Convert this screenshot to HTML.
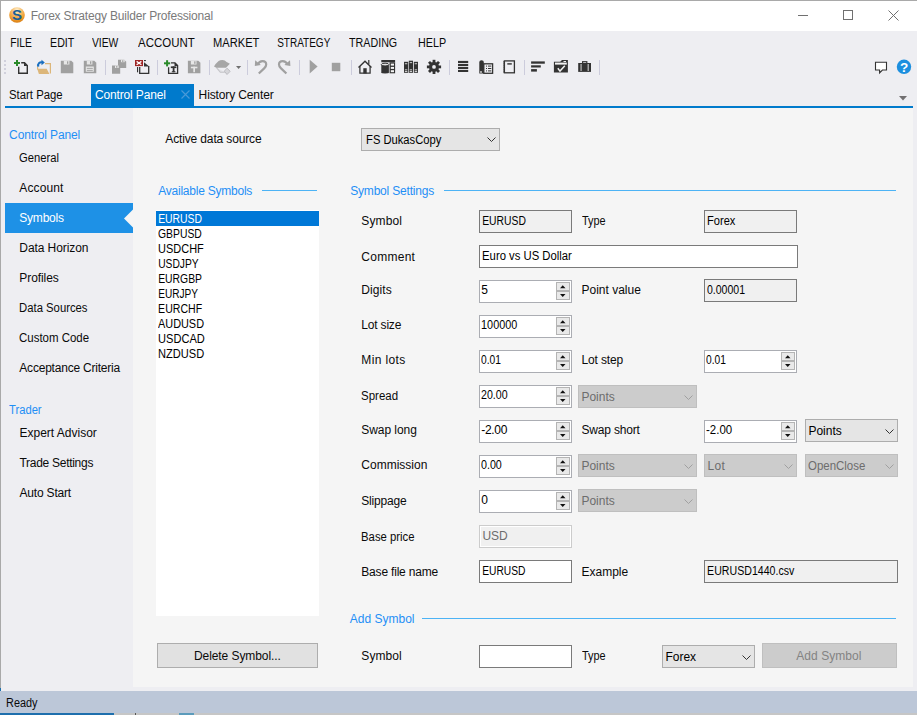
<!DOCTYPE html><html><head><meta charset="utf-8"><style>
html,body{margin:0;padding:0;width:917px;height:715px;overflow:hidden;position:relative;background:#eeeef2}
.t{position:absolute;white-space:nowrap;line-height:14px;font-family:"Liberation Sans",sans-serif}
.r{position:absolute}
</style></head><body>
<div class="r" style="left:0px;top:0px;width:917px;height:715px;background:#eeeef2;"></div>
<div class="r" style="left:0px;top:0px;width:917px;height:31px;background:#ffffff;"></div>
<div class="r" style="left:0px;top:0px;width:917px;height:1px;background:#a9a9a9;"></div>
<div class="r" style="left:0px;top:0px;width:1px;height:688px;background:#a9a9a9;"></div>
<div class="r" style="left:0px;top:688px;width:1px;height:27px;background:#1c6fad;"></div>
<svg class="r" style="left:9px;top:7px" width="16" height="16" viewBox="0 0 16 16">
<defs><radialGradient id="g1" cx="0.5" cy="0.2" r="0.85"><stop offset="0" stop-color="#fff4d8"/><stop offset="0.35" stop-color="#f6c070"/><stop offset="0.7" stop-color="#ee9a2a"/><stop offset="1" stop-color="#d27812"/></radialGradient></defs>
<circle cx="8" cy="8" r="7.8" fill="url(#g1)"/>
<text x="8.1" y="13.4" text-anchor="middle" font-family="Liberation Sans" font-weight="bold" font-size="15" fill="#175f96">S</text></svg>
<div class="t " style="left:30.7px;top:9px;color:#7a7a7a;font-size:12px;letter-spacing:-0.185px;">Forex Strategy Builder Professional</div>
<div class="r" style="left:798px;top:15px;width:10px;height:1px;background:#707070;"></div>
<div class="r" style="left:843px;top:10px;width:10px;height:10px;background:transparent;border:1px solid #707070;box-sizing:border-box;"></div>
<svg class="r" style="left:888px;top:10px" width="11" height="11" viewBox="0 0 11 11"><path d="M0.5 0.5L10.5 10.5M10.5 0.5L0.5 10.5" stroke="#707070" stroke-width="1"/></svg>
<div class="t " style="left:10px;top:36px;color:#0a0a0a;font-size:12px;transform:scaleX(0.8583);transform-origin:1px 0;">FILE</div>
<div class="t " style="left:50.2px;top:36px;color:#0a0a0a;font-size:12px;transform:scaleX(0.8846);transform-origin:1px 0;">EDIT</div>
<div class="t " style="left:92px;top:36px;color:#0a0a0a;font-size:12px;transform:scaleX(0.8581);transform-origin:0px 0;">VIEW</div>
<div class="t " style="left:138px;top:36px;color:#0a0a0a;font-size:12px;transform:scaleX(0.9559);transform-origin:0px 0;">ACCOUNT</div>
<div class="t " style="left:212.8px;top:36px;color:#0a0a0a;font-size:12px;transform:scaleX(0.9245);transform-origin:1px 0;">MARKET</div>
<div class="t " style="left:277.1px;top:36px;color:#0a0a0a;font-size:12px;transform:scaleX(0.8333);transform-origin:1px 0;">STRATEGY</div>
<div class="t " style="left:349.4px;top:36px;color:#0a0a0a;font-size:12px;transform:scaleX(0.8926);transform-origin:0px 0;">TRADING</div>
<div class="t " style="left:417.5px;top:36px;color:#0a0a0a;font-size:12px;transform:scaleX(0.8967);transform-origin:1px 0;">HELP</div>
<svg class="r" style="left:0;top:0" width="917" height="110" viewBox="0 0 917 110"><rect x="4" y="60" width="2" height="2" fill="#d0d0dc"/><rect x="4" y="64" width="2" height="2" fill="#d0d0dc"/><rect x="4" y="68" width="2" height="2" fill="#d0d0dc"/><rect x="4" y="72" width="2" height="2" fill="#d0d0dc"/><rect x="105" y="60" width="1" height="15" fill="#ccccdc"/><rect x="157" y="60" width="1" height="15" fill="#ccccdc"/><rect x="209" y="60" width="1" height="15" fill="#ccccdc"/><rect x="247" y="60" width="1" height="15" fill="#ccccdc"/><rect x="299" y="60" width="1" height="15" fill="#ccccdc"/><rect x="351" y="60" width="1" height="15" fill="#ccccdc"/><rect x="449" y="60" width="1" height="15" fill="#ccccdc"/><rect x="524" y="60" width="1" height="15" fill="#ccccdc"/><rect x="599" y="60" width="1" height="15" fill="#ccccdc"/><rect x="14" y="62" width="6" height="2" fill="#2a8a2a"/><rect x="16" y="60" width="2" height="6" fill="#2a8a2a"/><path d="M21.2 62.7H24.5L27.3 65.5V73.3H18.7V66.8" stroke="#333333" stroke-width="1.4" fill="none"/><path d="M24 62.5L27.5 66H24Z" fill="#333333"/><path d="M45 63.6H50.4V73.4" stroke="#dcb67a" stroke-width="1.2" fill="none"/><path d="M37.2 68.8H46.7L49.4 74H38.9Z" fill="#dcb67a"/><rect x="37" y="66.5" width="1.2" height="3" fill="#dcb67a"/><path d="M38.5 66.6C37.2 63.8 39.5 61.8 42.6 62.4" stroke="#1a6fc0" stroke-width="2" fill="none"/><path d="M41.5 59.8L44.8 62.5L41.5 65.2Z" fill="#1a6fc0"/><path d="M60.8 60.7H71.3L73.3 62.7V73.2H60.8Z" fill="#a0a0a0"/><rect x="63.8" y="60.7" width="5.6" height="3.8" fill="#e6e6e6"/><rect x="67.0" y="61.300000000000004" width="1.3" height="2.5" fill="#a0a0a0"/><path d="M83.8 60.7H94.3L96.3 62.7V73.2H83.8Z" fill="#a0a0a0"/><rect x="86.8" y="60.7" width="5.6" height="3.8" fill="#e6e6e6"/><rect x="90.0" y="61.300000000000004" width="1.3" height="2.5" fill="#a0a0a0"/><rect x="85.8" y="66.5" width="8.0" height="5.2" fill="#e6e6e6"/><rect x="86.8" y="67.9" width="6.0" height="0.9" fill="#a0a0a0"/><rect x="86.8" y="69.9" width="6.0" height="0.9" fill="#a0a0a0"/><path d="M118 59.7H124.2L126.2 61.7V67.9H118Z" fill="#a0a0a0"/><rect x="121" y="59.7" width="3.7" height="2.5" fill="#e6e6e6"/><rect x="122.1" y="60.300000000000004" width="1.3" height="1.6" fill="#a0a0a0"/><path d="M112 65.5H118.2L120.2 67.5V73.7H112Z" fill="#a0a0a0"/><rect x="115" y="65.5" width="3.7" height="2.5" fill="#e6e6e6"/><rect x="116.1" y="66.1" width="1.3" height="1.6" fill="#a0a0a0"/><path d="M148.7 66V73.3H139.7V67" stroke="#333333" stroke-width="1.3" fill="none"/><path d="M144 62.2L149.3 66.6H144Z" fill="#333333"/><rect x="144" y="60" width="1.9" height="1.1" fill="#333333"/><rect x="137" y="67" width="1.1" height="5.3" fill="#333333"/><rect x="135" y="60" width="8" height="6.1" fill="#9e2424"/><path d="M136.6 61.4L141.4 64.7M141.4 61.4L136.6 64.7" stroke="#ffffff" stroke-width="1.3"/><rect x="138" y="62" width="2" height="2" fill="#fff"/><rect x="164" y="62.3" width="6.2" height="2" fill="#2a8a2a"/><rect x="166.1" y="60.2" width="2" height="6.2" fill="#2a8a2a"/><path d="M171 62.9H175L177.6 65.5V73.3H168.6V67.2" stroke="#333333" stroke-width="1.3" fill="none"/><path d="M174.5 62.6L178 66.1H174.5Z" fill="#333333"/><rect x="170.8" y="66.4" width="5.6" height="1.7" fill="#333333"/><rect x="172.7" y="66.4" width="1.8" height="5.8" fill="#333333"/><rect x="171.8" y="71.2" width="3.6" height="1" fill="#333333"/><path d="M187.9 60.7H198.4L200.4 62.7V73.2H187.9Z" fill="#a0a0a0"/><rect x="190.9" y="60.7" width="5.6" height="3.8" fill="#e6e6e6"/><rect x="194.2" y="61.300000000000004" width="1.3" height="2.5" fill="#a0a0a0"/><rect x="190.9" y="66.7" width="6.5" height="1.6" fill="#e6e6e6"/><rect x="193.3" y="66.7" width="1.7" height="5.5" fill="#e6e6e6"/><path d="M216.5 67.6L220.3 72.3H224.8" stroke="#c4c4c8" stroke-width="1.1" fill="#e2e2e6"/><path d="M224.3 71.2L227 68.2L230.2 71.3L227 74.5Z" fill="#d6d6da" stroke="#b8b8bc" stroke-width="0.9"/><path d="M214 66.4Q215.2 64 218.6 61Q220 60.1 222.4 60.1Q225 60.1 226.6 61.9L229.9 63.8L226 67.8H216.3Z" fill="#a6a6a6"/><path d="M236 66H241.2L238.6 69Z" fill="#707070"/><path d="M257.6 64.4C259 61.8 260.8 61.1 262.5 61.1C265 61.1 266.2 62.7 266.2 64.6C266.2 66.1 265.5 67.1 264.4 68.1L258.8 73.5" stroke="#a0a0a0" stroke-width="2.2" fill="none"/><path d="M255.2 60.2L254.8 65.9L260.8 65Z" fill="#a0a0a0"/><g transform="translate(545.2 0) scale(-1 1)"><path d="M257.6 64.4C259 61.8 260.8 61.1 262.5 61.1C265 61.1 266.2 62.7 266.2 64.6C266.2 66.1 265.5 67.1 264.4 68.1L258.8 73.5" stroke="#a0a0a0" stroke-width="2.2" fill="none"/><path d="M255.2 60.2L254.8 65.9L260.8 65Z" fill="#a0a0a0"/></g><path d="M309.7 59.8L317.6 66.6L309.7 73.4Z" fill="#a0a0a0"/><rect x="331.8" y="62.8" width="8.5" height="8.4" fill="#a0a0a0"/><path d="M358.5 67.6L365 61.2L371.5 67.6" stroke="#333333" stroke-width="1.35" fill="none"/><rect x="368.2" y="60" width="1.2" height="4.3" fill="#333333"/><path d="M359.9 66.2V73.1H370.1V66.2" stroke="#333333" stroke-width="1.25" fill="none"/><rect x="363.3" y="68.2" width="3.4" height="5.3" fill="#333333"/><rect x="381.3" y="60" width="13.8" height="2.3" fill="#333333"/><rect x="381.3" y="64.6" width="7.6" height="8.1" fill="#333333"/><ellipse cx="385.1" cy="64.6" rx="3.8" ry="1.4" fill="#e0e0e0" stroke="#333333" stroke-width="1"/><ellipse cx="385.1" cy="72.6" rx="3.8" ry="0.9" fill="#333333"/><rect x="389.6" y="62.3" width="5.5" height="11" fill="#333333"/><rect x="390.8" y="63.6" width="3.2" height="2" fill="#f4f4f4"/><rect x="390.8" y="66.9" width="3.2" height="2" fill="#f4f4f4"/><rect x="390.8" y="70.2" width="3.2" height="2" fill="#f4f4f4"/><rect x="404" y="61.8" width="4.2" height="11.0" fill="#333333"/><rect x="404.9" y="63.3" width="2.4" height="0.9" fill="#e0e0e0"/><rect x="404.9" y="69.4" width="2.4" height="0.9" fill="#e0e0e0"/><rect x="404.9" y="71" width="2.4" height="0.9" fill="#e0e0e0"/><rect x="408.8" y="60.7" width="4.2" height="12.1" fill="#333333"/><rect x="409.7" y="62.2" width="2.4" height="0.9" fill="#e0e0e0"/><rect x="409.7" y="69.4" width="2.4" height="0.9" fill="#e0e0e0"/><rect x="409.7" y="71" width="2.4" height="0.9" fill="#e0e0e0"/><rect x="413.8" y="61.8" width="4.2" height="11.0" fill="#333333"/><rect x="414.7" y="63.3" width="2.4" height="0.9" fill="#e0e0e0"/><rect x="414.7" y="69.4" width="2.4" height="0.9" fill="#e0e0e0"/><rect x="414.7" y="71" width="2.4" height="0.9" fill="#e0e0e0"/><rect x="432.6" y="59.8" width="2.8" height="3" fill="#333333" transform="rotate(0 434 66.9)"/><rect x="432.6" y="59.8" width="2.8" height="3" fill="#333333" transform="rotate(45 434 66.9)"/><rect x="432.6" y="59.8" width="2.8" height="3" fill="#333333" transform="rotate(90 434 66.9)"/><rect x="432.6" y="59.8" width="2.8" height="3" fill="#333333" transform="rotate(135 434 66.9)"/><rect x="432.6" y="59.8" width="2.8" height="3" fill="#333333" transform="rotate(180 434 66.9)"/><rect x="432.6" y="59.8" width="2.8" height="3" fill="#333333" transform="rotate(225 434 66.9)"/><rect x="432.6" y="59.8" width="2.8" height="3" fill="#333333" transform="rotate(270 434 66.9)"/><rect x="432.6" y="59.8" width="2.8" height="3" fill="#333333" transform="rotate(315 434 66.9)"/><circle cx="434" cy="66.9" r="5" fill="#333333"/><circle cx="434" cy="66.9" r="1.9" fill="#eeeef2"/><rect x="458" y="60.9" width="10.2" height="2.1" fill="#333333"/><rect x="458" y="63.9" width="10.2" height="2.1" fill="#333333"/><rect x="458" y="66.9" width="10.2" height="2.1" fill="#333333"/><rect x="458" y="69.9" width="10.2" height="2.1" fill="#333333"/><rect x="483.8" y="63.8" width="8.8" height="9.5" fill="none" stroke="#333333" stroke-width="1.3"/><path d="M479.3 62Q479.3 60.2 481.5 60.2Q483.8 60.2 483.8 62V73.6H479.3Z" fill="#333333"/><circle cx="481" cy="72" r="0.9" fill="#ddd"/><rect x="486" y="65.6" width="1" height="1" fill="#333333"/><rect x="488" y="65.6" width="3.3" height="1" fill="#333333"/><rect x="486" y="68" width="1" height="1" fill="#333333"/><rect x="488" y="68" width="3.3" height="1" fill="#333333"/><rect x="486" y="70.4" width="1" height="1" fill="#333333"/><rect x="488" y="70.4" width="3.3" height="1" fill="#333333"/><rect x="504.4" y="60.9" width="10" height="11.9" fill="none" stroke="#333333" stroke-width="1.3"/><rect x="507.3" y="63.2" width="4.5" height="1.4" fill="#333333"/><rect x="503" y="61.5" width="1.2" height="0.9" fill="#333333"/><rect x="503" y="63.5" width="1.2" height="0.9" fill="#333333"/><rect x="503" y="65.5" width="1.2" height="0.9" fill="#333333"/><rect x="503" y="67.5" width="1.2" height="0.9" fill="#333333"/><rect x="503" y="69.5" width="1.2" height="0.9" fill="#333333"/><rect x="503" y="71.5" width="1.2" height="0.9" fill="#333333"/><rect x="531.1" y="61.4" width="13.7" height="2.3" fill="#333333"/><rect x="531.1" y="65.3" width="9.7" height="2.2" fill="#333333"/><rect x="531.1" y="69.1" width="5.8" height="2.5" fill="#333333"/><path d="M553.9 61.8H560.2L562 59.9H567.9V72.6H553.9Z" fill="#333333"/><rect x="555" y="62.6" width="11.8" height="2" fill="#f2f2f2"/><rect x="563.5" y="61" width="2.5" height="1" fill="#f2f2f2"/><path d="M557.8 68.3L560 71.1L564.8 65.8" stroke="#f2f2f2" stroke-width="1.5" fill="none"/><rect x="582.6" y="61.7" width="4.2" height="2" fill="none" stroke="#333333" stroke-width="1.2"/><rect x="578.2" y="63" width="12.8" height="8.9" fill="#333333"/><rect x="580.6" y="64" width="0.9" height="7" fill="#eee"/><rect x="587.7" y="64" width="0.9" height="7" fill="#eee"/><path d="M875.5 62.2H886.5V70H882.4L879.6 72.8V70H875.5Z" fill="#fff" stroke="#333333" stroke-width="1.1"/><circle cx="904" cy="66.8" r="7.2" fill="#1c8fdf"/><text x="904.2" y="71.6" text-anchor="middle" font-family="Liberation Sans" font-weight="bold" font-size="13.5" fill="#fff">?</text></svg>
<div class="r" style="left:91px;top:84px;width:103px;height:22px;background:#007acc;"></div>
<div class="t " style="left:8.9px;top:88px;color:#0a0a0a;font-size:12px;transform:scaleX(0.9446);transform-origin:1px 0;">Start Page</div>
<div class="t " style="left:94.9px;top:88px;color:#ffffff;font-size:12px;letter-spacing:-0.142px;">Control Panel</div>
<svg class="r" style="left:181px;top:90px" width="9" height="9" viewBox="0 0 9 9"><path d="M0.5 0.5L8.5 8.5M8.5 0.5L0.5 8.5" stroke="#4a9ad8" stroke-width="1.1"/></svg>
<div class="t " style="left:198.6px;top:88px;color:#0a0a0a;font-size:12px;letter-spacing:-0.123px;">History Center</div>
<div class="r" style="left:5px;top:106px;width:908px;height:2px;background:#007acc;"></div>
<svg class="r" style="left:899px;top:96px" width="8" height="5" viewBox="0 0 8 5"><path d="M0 0H8L4 4.5Z" fill="#716f71"/></svg>
<div class="r" style="left:133px;top:108px;width:780px;height:579px;background:#f5f5f5;"></div>
<div class="t " style="left:9.1px;top:128px;color:#1f8ff5;font-size:12px;letter-spacing:-0.133px;">Control Panel</div>
<div class="t " style="left:19.3px;top:151px;color:#0a0a0a;font-size:12px;transform:scaleX(0.9357);transform-origin:0px 0;">General</div>
<div class="t " style="left:19.3px;top:181px;color:#0a0a0a;font-size:12px;letter-spacing:0.133px;">Account</div>
<div class="r" style="left:5px;top:203px;width:128px;height:30px;background:#1e91e6;"></div>
<svg class="r" style="left:124px;top:209px" width="9" height="19" viewBox="0 0 9 19"><path d="M9 0.5L0 9.5L9 18.5Z" fill="#f5f5f5"/></svg>
<div class="t " style="left:19.3px;top:211px;color:#ffffff;font-size:12px;letter-spacing:-0.217px;">Symbols</div>
<div class="t " style="left:19.3px;top:241px;color:#0a0a0a;font-size:12px;letter-spacing:-0.073px;">Data Horizon</div>
<div class="t " style="left:19.3px;top:271px;color:#0a0a0a;font-size:12px;letter-spacing:-0.071px;">Profiles</div>
<div class="t " style="left:19.3px;top:301px;color:#0a0a0a;font-size:12px;transform:scaleX(0.9417);transform-origin:1px 0;">Data Sources</div>
<div class="t " style="left:19.3px;top:331px;color:#0a0a0a;font-size:12px;transform:scaleX(0.9548);transform-origin:0px 0;">Custom Code</div>
<div class="t " style="left:19.3px;top:361px;color:#0a0a0a;font-size:12px;letter-spacing:-0.211px;">Acceptance Criteria</div>
<div class="t " style="left:9.2px;top:403px;color:#1f8ff5;font-size:12px;transform:scaleX(0.9343);transform-origin:0px 0;">Trader</div>
<div class="t " style="left:19.5px;top:426px;color:#0a0a0a;font-size:12px;">Expert Advisor</div>
<div class="t " style="left:19.5px;top:456px;color:#0a0a0a;font-size:12px;letter-spacing:-0.285px;">Trade Settings</div>
<div class="t " style="left:19.5px;top:486px;color:#0a0a0a;font-size:12px;letter-spacing:-0.189px;">Auto Start</div>
<div class="r" style="left:0px;top:691px;width:917px;height:22px;background:#bcc7d8;"></div>
<div class="r" style="left:0px;top:713px;width:917px;height:2px;background:#c6c6c6;"></div>
<div class="r" style="left:0px;top:713px;width:114px;height:2px;background:#1e6fad;"></div>
<div class="r" style="left:135px;top:713px;width:1px;height:2px;background:#555555;"></div>
<div class="r" style="left:179px;top:713px;width:15px;height:2px;background:#5b9bbb;"></div>
<div class="t " style="left:5.8px;top:696px;color:#0a0a0a;font-size:12px;transform:scaleX(0.9059);transform-origin:1px 0;">Ready</div>
<div class="t " style="left:165.3px;top:132px;color:#0a0a0a;font-size:12px;letter-spacing:-0.141px;">Active data source</div>
<div class="r" style="left:361px;top:128px;width:139px;height:23px;background:#e5e5e5;border:1px solid #adadad;box-sizing:border-box;"></div>
<div class="t " style="left:365.5px;top:133px;color:#000000;font-size:12px;transform:scaleX(0.9325);transform-origin:1px 0;">FS DukasCopy</div>
<svg class="r" style="left:487px;top:137px" width="9" height="5" viewBox="0 0 9 5"><path d="M0.5 0.5L4.5 4.5L8.5 0.5" stroke="#333" fill="none" stroke-width="1"/></svg>
<div class="t " style="left:158.2px;top:184px;color:#1f8ff5;font-size:12px;letter-spacing:-0.231px;">Available Symbols</div>
<div class="r" style="left:262px;top:190px;width:55px;height:1px;background:#4cb3f5;"></div>
<div class="t " style="left:350.2px;top:184px;color:#1f8ff5;font-size:12px;letter-spacing:-0.186px;">Symbol Settings</div>
<div class="r" style="left:444px;top:190px;width:452px;height:1px;background:#4cb3f5;"></div>
<div class="t " style="left:349.8px;top:612px;color:#1f8ff5;font-size:12px;">Add Symbol</div>
<div class="r" style="left:422px;top:618px;width:474px;height:1px;background:#4cb3f5;"></div>
<div class="r" style="left:156px;top:210px;width:163px;height:406px;background:#ffffff;"></div>
<div class="r" style="left:156px;top:211px;width:163px;height:15px;background:#0078d7;"></div>
<div class="t " style="left:158.2px;top:212px;color:#ffffff;font-size:12px;transform:scaleX(0.8653);transform-origin:1px 0;">EURUSD</div>
<div class="t " style="left:158.2px;top:227px;color:#000000;font-size:12px;transform:scaleX(0.8640);transform-origin:0px 0;">GBPUSD</div>
<div class="t " style="left:158.2px;top:242px;color:#000000;font-size:12px;transform:scaleX(0.9143);transform-origin:1px 0;">USDCHF</div>
<div class="t " style="left:158.2px;top:257px;color:#000000;font-size:12px;transform:scaleX(0.8543);transform-origin:1px 0;">USDJPY</div>
<div class="t " style="left:158.2px;top:272px;color:#000000;font-size:12px;transform:scaleX(0.8653);transform-origin:1px 0;">EURGBP</div>
<div class="t " style="left:158.2px;top:287px;color:#000000;font-size:12px;transform:scaleX(0.8413);transform-origin:1px 0;">EURJPY</div>
<div class="t " style="left:158.2px;top:302px;color:#000000;font-size:12px;transform:scaleX(0.8796);transform-origin:1px 0;">EURCHF</div>
<div class="t " style="left:158.2px;top:317px;color:#000000;font-size:12px;transform:scaleX(0.9080);transform-origin:0px 0;">AUDUSD</div>
<div class="t " style="left:158.2px;top:332px;color:#000000;font-size:12px;transform:scaleX(0.9224);transform-origin:1px 0;">USDCAD</div>
<div class="t " style="left:158.2px;top:347px;color:#000000;font-size:12px;transform:scaleX(0.9224);transform-origin:1px 0;">NZDUSD</div>
<div class="r" style="left:157px;top:643px;width:161px;height:25px;background:#e1e1e1;border:1px solid #adadad;box-sizing:border-box;"></div>
<div class="t " style="left:194px;top:649px;color:#0a0a0a;font-size:12px;letter-spacing:-0.080px;">Delete Symbol...</div>
<div class="t " style="left:361.3px;top:214px;color:#0a0a0a;font-size:12px;letter-spacing:0.120px;">Symbol</div>
<div class="t " style="left:361.3px;top:250px;color:#0a0a0a;font-size:12px;letter-spacing:0.267px;">Comment</div>
<div class="t " style="left:361.3px;top:283px;color:#0a0a0a;font-size:12px;letter-spacing:0.080px;">Digits</div>
<div class="t " style="left:361.3px;top:318px;color:#0a0a0a;font-size:12px;letter-spacing:-0.186px;">Lot size</div>
<div class="t " style="left:361.3px;top:353px;color:#0a0a0a;font-size:12px;letter-spacing:0.386px;">Min lots</div>
<div class="t " style="left:361.3px;top:389px;color:#0a0a0a;font-size:12px;transform:scaleX(0.9568);transform-origin:1px 0;">Spread</div>
<div class="t " style="left:361.3px;top:423px;color:#0a0a0a;font-size:12px;letter-spacing:-0.062px;">Swap long</div>
<div class="t " style="left:361.3px;top:458px;color:#0a0a0a;font-size:12px;">Commission</div>
<div class="t " style="left:361.3px;top:494px;color:#0a0a0a;font-size:12px;letter-spacing:-0.186px;">Slippage</div>
<div class="t " style="left:361.3px;top:530px;color:#0a0a0a;font-size:12px;transform:scaleX(0.9429);transform-origin:1px 0;">Base price</div>
<div class="t " style="left:361.3px;top:565px;color:#0a0a0a;font-size:12px;letter-spacing:-0.192px;">Base file name</div>
<div class="t " style="left:361.3px;top:649px;color:#0a0a0a;font-size:12px;letter-spacing:0.080px;">Symbol</div>
<div class="t " style="left:581.5px;top:214px;color:#0a0a0a;font-size:12px;transform:scaleX(0.9077);transform-origin:0px 0;">Type</div>
<div class="t " style="left:581.5px;top:283px;color:#0a0a0a;font-size:12px;">Point value</div>
<div class="t " style="left:581.5px;top:353px;color:#0a0a0a;font-size:12px;letter-spacing:-0.129px;">Lot step</div>
<div class="t " style="left:581.5px;top:423px;color:#0a0a0a;font-size:12px;letter-spacing:-0.178px;">Swap short</div>
<div class="t " style="left:581.5px;top:565px;color:#0a0a0a;font-size:12px;">Example</div>
<div class="t " style="left:581.5px;top:649px;color:#0a0a0a;font-size:12px;transform:scaleX(0.9077);transform-origin:0px 0;">Type</div>
<div class="r" style="left:479px;top:210px;width:93px;height:23px;background:#f0f0f0;border:1px solid #7a7a7a;box-sizing:border-box;"></div>
<div class="t " style="left:482.3px;top:214px;color:#000000;font-size:12px;transform:scaleX(0.8633);transform-origin:1px 0;">EURUSD</div>
<div class="r" style="left:704px;top:210px;width:93px;height:23px;background:#f0f0f0;border:1px solid #7a7a7a;box-sizing:border-box;"></div>
<div class="t " style="left:707.3px;top:214px;color:#000000;font-size:12px;transform:scaleX(0.9233);transform-origin:1px 0;">Forex</div>
<div class="r" style="left:479px;top:245px;width:319px;height:23px;background:#ffffff;border:1px solid #7a7a7a;box-sizing:border-box;"></div>
<div class="t " style="left:482.3px;top:249px;color:#000000;font-size:12px;transform:scaleX(0.9415);transform-origin:1px 0;">Euro vs US Dollar</div>
<div class="r" style="left:479px;top:280px;width:93px;height:23px;background:#ffffff;border:1px solid #abadb3;box-sizing:border-box;"></div>
<div class="r" style="left:556px;top:282px;width:14px;height:9px;background:#e9e9e9;border:1px solid #b4b4b4;box-sizing:border-box;"></div>
<div class="r" style="left:556px;top:291px;width:14px;height:9px;background:#e9e9e9;border:1px solid #b4b4b4;box-sizing:border-box;"></div>
<svg class="r" style="left:560px;top:285px" width="6" height="14" viewBox="0 0 6 14"><path d="M0 3.3H5.5L2.75 0.3Z M0 9.1H5.5L2.75 12.1Z" fill="#111"/></svg>
<div class="t " style="left:481.2px;top:283px;color:#000000;font-size:12px;">5</div>
<div class="r" style="left:704px;top:279px;width:93px;height:23px;background:#f0f0f0;border:1px solid #7a7a7a;box-sizing:border-box;"></div>
<div class="t " style="left:707.3px;top:283px;color:#000000;font-size:12px;transform:scaleX(0.8767);transform-origin:0px 0;">0.00001</div>
<div class="r" style="left:479px;top:315px;width:93px;height:23px;background:#ffffff;border:1px solid #abadb3;box-sizing:border-box;"></div>
<div class="r" style="left:556px;top:317px;width:14px;height:9px;background:#e9e9e9;border:1px solid #b4b4b4;box-sizing:border-box;"></div>
<div class="r" style="left:556px;top:326px;width:14px;height:9px;background:#e9e9e9;border:1px solid #b4b4b4;box-sizing:border-box;"></div>
<svg class="r" style="left:560px;top:320px" width="6" height="14" viewBox="0 0 6 14"><path d="M0 3.3H5.5L2.75 0.3Z M0 9.1H5.5L2.75 12.1Z" fill="#111"/></svg>
<div class="t " style="left:481.2px;top:318px;color:#000000;font-size:12px;transform:scaleX(0.9026);transform-origin:1px 0;">100000</div>
<div class="r" style="left:479px;top:350px;width:93px;height:23px;background:#ffffff;border:1px solid #abadb3;box-sizing:border-box;"></div>
<div class="r" style="left:556px;top:352px;width:14px;height:9px;background:#e9e9e9;border:1px solid #b4b4b4;box-sizing:border-box;"></div>
<div class="r" style="left:556px;top:361px;width:14px;height:9px;background:#e9e9e9;border:1px solid #b4b4b4;box-sizing:border-box;"></div>
<svg class="r" style="left:560px;top:355px" width="6" height="14" viewBox="0 0 6 14"><path d="M0 3.3H5.5L2.75 0.3Z M0 9.1H5.5L2.75 12.1Z" fill="#111"/></svg>
<div class="t " style="left:481.2px;top:353px;color:#000000;font-size:12px;transform:scaleX(0.8522);transform-origin:0px 0;">0.01</div>
<div class="r" style="left:704px;top:350px;width:93px;height:23px;background:#ffffff;border:1px solid #abadb3;box-sizing:border-box;"></div>
<div class="r" style="left:781px;top:352px;width:14px;height:9px;background:#e9e9e9;border:1px solid #b4b4b4;box-sizing:border-box;"></div>
<div class="r" style="left:781px;top:361px;width:14px;height:9px;background:#e9e9e9;border:1px solid #b4b4b4;box-sizing:border-box;"></div>
<svg class="r" style="left:785px;top:355px" width="6" height="14" viewBox="0 0 6 14"><path d="M0 3.3H5.5L2.75 0.3Z M0 9.1H5.5L2.75 12.1Z" fill="#111"/></svg>
<div class="t " style="left:706.2px;top:353px;color:#000000;font-size:12px;transform:scaleX(0.8522);transform-origin:0px 0;">0.01</div>
<div class="r" style="left:479px;top:385px;width:93px;height:23px;background:#ffffff;border:1px solid #abadb3;box-sizing:border-box;"></div>
<div class="r" style="left:556px;top:387px;width:14px;height:9px;background:#e9e9e9;border:1px solid #b4b4b4;box-sizing:border-box;"></div>
<div class="r" style="left:556px;top:396px;width:14px;height:9px;background:#e9e9e9;border:1px solid #b4b4b4;box-sizing:border-box;"></div>
<svg class="r" style="left:560px;top:390px" width="6" height="14" viewBox="0 0 6 14"><path d="M0 3.3H5.5L2.75 0.3Z M0 9.1H5.5L2.75 12.1Z" fill="#111"/></svg>
<div class="t " style="left:481.2px;top:388px;color:#000000;font-size:12px;transform:scaleX(0.8867);transform-origin:0px 0;">20.00</div>
<div class="r" style="left:578px;top:385px;width:119px;height:23px;background:#cccccc;border:1px solid #bfbfbf;box-sizing:border-box;"></div>
<div class="t " style="left:581.4px;top:390px;color:#6d6d6d;font-size:12px;">Points</div>
<svg class="r" style="left:684px;top:395px" width="9" height="5" viewBox="0 0 9 5"><path d="M0.5 0.5L4.5 4.5L8.5 0.5" stroke="#a0a0a0" fill="none" stroke-width="1"/></svg>
<div class="r" style="left:479px;top:420px;width:93px;height:23px;background:#ffffff;border:1px solid #abadb3;box-sizing:border-box;"></div>
<div class="r" style="left:556px;top:422px;width:14px;height:9px;background:#e9e9e9;border:1px solid #b4b4b4;box-sizing:border-box;"></div>
<div class="r" style="left:556px;top:431px;width:14px;height:9px;background:#e9e9e9;border:1px solid #b4b4b4;box-sizing:border-box;"></div>
<svg class="r" style="left:560px;top:425px" width="6" height="14" viewBox="0 0 6 14"><path d="M0 3.3H5.5L2.75 0.3Z M0 9.1H5.5L2.75 12.1Z" fill="#111"/></svg>
<div class="t " style="left:481.2px;top:423px;color:#000000;font-size:12px;letter-spacing:-0.300px;">-2.00</div>
<div class="r" style="left:704px;top:420px;width:93px;height:23px;background:#ffffff;border:1px solid #abadb3;box-sizing:border-box;"></div>
<div class="r" style="left:781px;top:422px;width:14px;height:9px;background:#e9e9e9;border:1px solid #b4b4b4;box-sizing:border-box;"></div>
<div class="r" style="left:781px;top:431px;width:14px;height:9px;background:#e9e9e9;border:1px solid #b4b4b4;box-sizing:border-box;"></div>
<svg class="r" style="left:785px;top:425px" width="6" height="14" viewBox="0 0 6 14"><path d="M0 3.3H5.5L2.75 0.3Z M0 9.1H5.5L2.75 12.1Z" fill="#111"/></svg>
<div class="t " style="left:706.2px;top:423px;color:#000000;font-size:12px;transform:scaleX(0.9556);transform-origin:0px 0;">-2.00</div>
<div class="r" style="left:805px;top:419px;width:93px;height:23px;background:#e5e5e5;border:1px solid #adadad;box-sizing:border-box;"></div>
<div class="t " style="left:808.4px;top:424px;color:#000000;font-size:12px;">Points</div>
<svg class="r" style="left:885px;top:429px" width="9" height="5" viewBox="0 0 9 5"><path d="M0.5 0.5L4.5 4.5L8.5 0.5" stroke="#333" fill="none" stroke-width="1"/></svg>
<div class="r" style="left:479px;top:455px;width:93px;height:23px;background:#ffffff;border:1px solid #abadb3;box-sizing:border-box;"></div>
<div class="r" style="left:556px;top:457px;width:14px;height:9px;background:#e9e9e9;border:1px solid #b4b4b4;box-sizing:border-box;"></div>
<div class="r" style="left:556px;top:466px;width:14px;height:9px;background:#e9e9e9;border:1px solid #b4b4b4;box-sizing:border-box;"></div>
<svg class="r" style="left:560px;top:460px" width="6" height="14" viewBox="0 0 6 14"><path d="M0 3.3H5.5L2.75 0.3Z M0 9.1H5.5L2.75 12.1Z" fill="#111"/></svg>
<div class="t " style="left:481.2px;top:458px;color:#000000;font-size:12px;transform:scaleX(0.8913);transform-origin:0px 0;">0.00</div>
<div class="r" style="left:578px;top:454px;width:119px;height:23px;background:#cccccc;border:1px solid #bfbfbf;box-sizing:border-box;"></div>
<div class="t " style="left:581.4px;top:459px;color:#6d6d6d;font-size:12px;">Points</div>
<svg class="r" style="left:684px;top:464px" width="9" height="5" viewBox="0 0 9 5"><path d="M0.5 0.5L4.5 4.5L8.5 0.5" stroke="#a0a0a0" fill="none" stroke-width="1"/></svg>
<div class="r" style="left:704px;top:454px;width:93px;height:23px;background:#cccccc;border:1px solid #bfbfbf;box-sizing:border-box;"></div>
<div class="t " style="left:707.4px;top:459px;color:#6d6d6d;font-size:12px;letter-spacing:0.400px;">Lot</div>
<svg class="r" style="left:784px;top:464px" width="9" height="5" viewBox="0 0 9 5"><path d="M0.5 0.5L4.5 4.5L8.5 0.5" stroke="#a0a0a0" fill="none" stroke-width="1"/></svg>
<div class="r" style="left:805px;top:454px;width:93px;height:23px;background:#cccccc;border:1px solid #bfbfbf;box-sizing:border-box;"></div>
<div class="t " style="left:808.4px;top:459px;color:#6d6d6d;font-size:12px;transform:scaleX(0.9550);transform-origin:0px 0;">OpenClose</div>
<svg class="r" style="left:885px;top:464px" width="9" height="5" viewBox="0 0 9 5"><path d="M0.5 0.5L4.5 4.5L8.5 0.5" stroke="#a0a0a0" fill="none" stroke-width="1"/></svg>
<div class="r" style="left:479px;top:490px;width:93px;height:23px;background:#ffffff;border:1px solid #abadb3;box-sizing:border-box;"></div>
<div class="r" style="left:556px;top:492px;width:14px;height:9px;background:#e9e9e9;border:1px solid #b4b4b4;box-sizing:border-box;"></div>
<div class="r" style="left:556px;top:501px;width:14px;height:9px;background:#e9e9e9;border:1px solid #b4b4b4;box-sizing:border-box;"></div>
<svg class="r" style="left:560px;top:495px" width="6" height="14" viewBox="0 0 6 14"><path d="M0 3.3H5.5L2.75 0.3Z M0 9.1H5.5L2.75 12.1Z" fill="#111"/></svg>
<div class="t " style="left:481.2px;top:493px;color:#000000;font-size:12px;">0</div>
<div class="r" style="left:578px;top:489px;width:119px;height:23px;background:#cccccc;border:1px solid #bfbfbf;box-sizing:border-box;"></div>
<div class="t " style="left:581.4px;top:494px;color:#6d6d6d;font-size:12px;">Points</div>
<svg class="r" style="left:684px;top:499px" width="9" height="5" viewBox="0 0 9 5"><path d="M0.5 0.5L4.5 4.5L8.5 0.5" stroke="#a0a0a0" fill="none" stroke-width="1"/></svg>
<div class="r" style="left:479px;top:525px;width:93px;height:23px;background:#f0f0f0;border:1px solid #cccccc;box-sizing:border-box;box-shadow:inset 0 0 0 1px #ffffff;"></div>
<div class="t " style="left:482.4px;top:529px;color:#6d6d6d;font-size:12px;">USD</div>
<div class="r" style="left:479px;top:560px;width:93px;height:23px;background:#ffffff;border:1px solid #7a7a7a;box-sizing:border-box;"></div>
<div class="t " style="left:482.3px;top:564px;color:#000000;font-size:12px;transform:scaleX(0.8551);transform-origin:1px 0;">EURUSD</div>
<div class="r" style="left:704px;top:560px;width:194px;height:23px;background:#f0f0f0;border:1px solid #7a7a7a;box-sizing:border-box;"></div>
<div class="t " style="left:707.3px;top:564px;color:#000000;font-size:12px;transform:scaleX(0.8837);transform-origin:1px 0;">EURUSD1440.csv</div>
<div class="r" style="left:479px;top:645px;width:93px;height:23px;background:#ffffff;border:1px solid #7a7a7a;box-sizing:border-box;"></div>
<div class="r" style="left:662px;top:645px;width:93px;height:23px;background:#e5e5e5;border:1px solid #adadad;box-sizing:border-box;"></div>
<div class="t " style="left:665.4px;top:650px;color:#000000;font-size:12px;">Forex</div>
<svg class="r" style="left:742px;top:655px" width="9" height="5" viewBox="0 0 9 5"><path d="M0.5 0.5L4.5 4.5L8.5 0.5" stroke="#333" fill="none" stroke-width="1"/></svg>
<div class="r" style="left:762px;top:643px;width:135px;height:25px;background:#cccccc;border:1px solid #bfbfbf;box-sizing:border-box;"></div>
<div class="t " style="left:796.2px;top:649px;color:#838383;font-size:12px;letter-spacing:0.067px;">Add Symbol</div>
</body></html>
